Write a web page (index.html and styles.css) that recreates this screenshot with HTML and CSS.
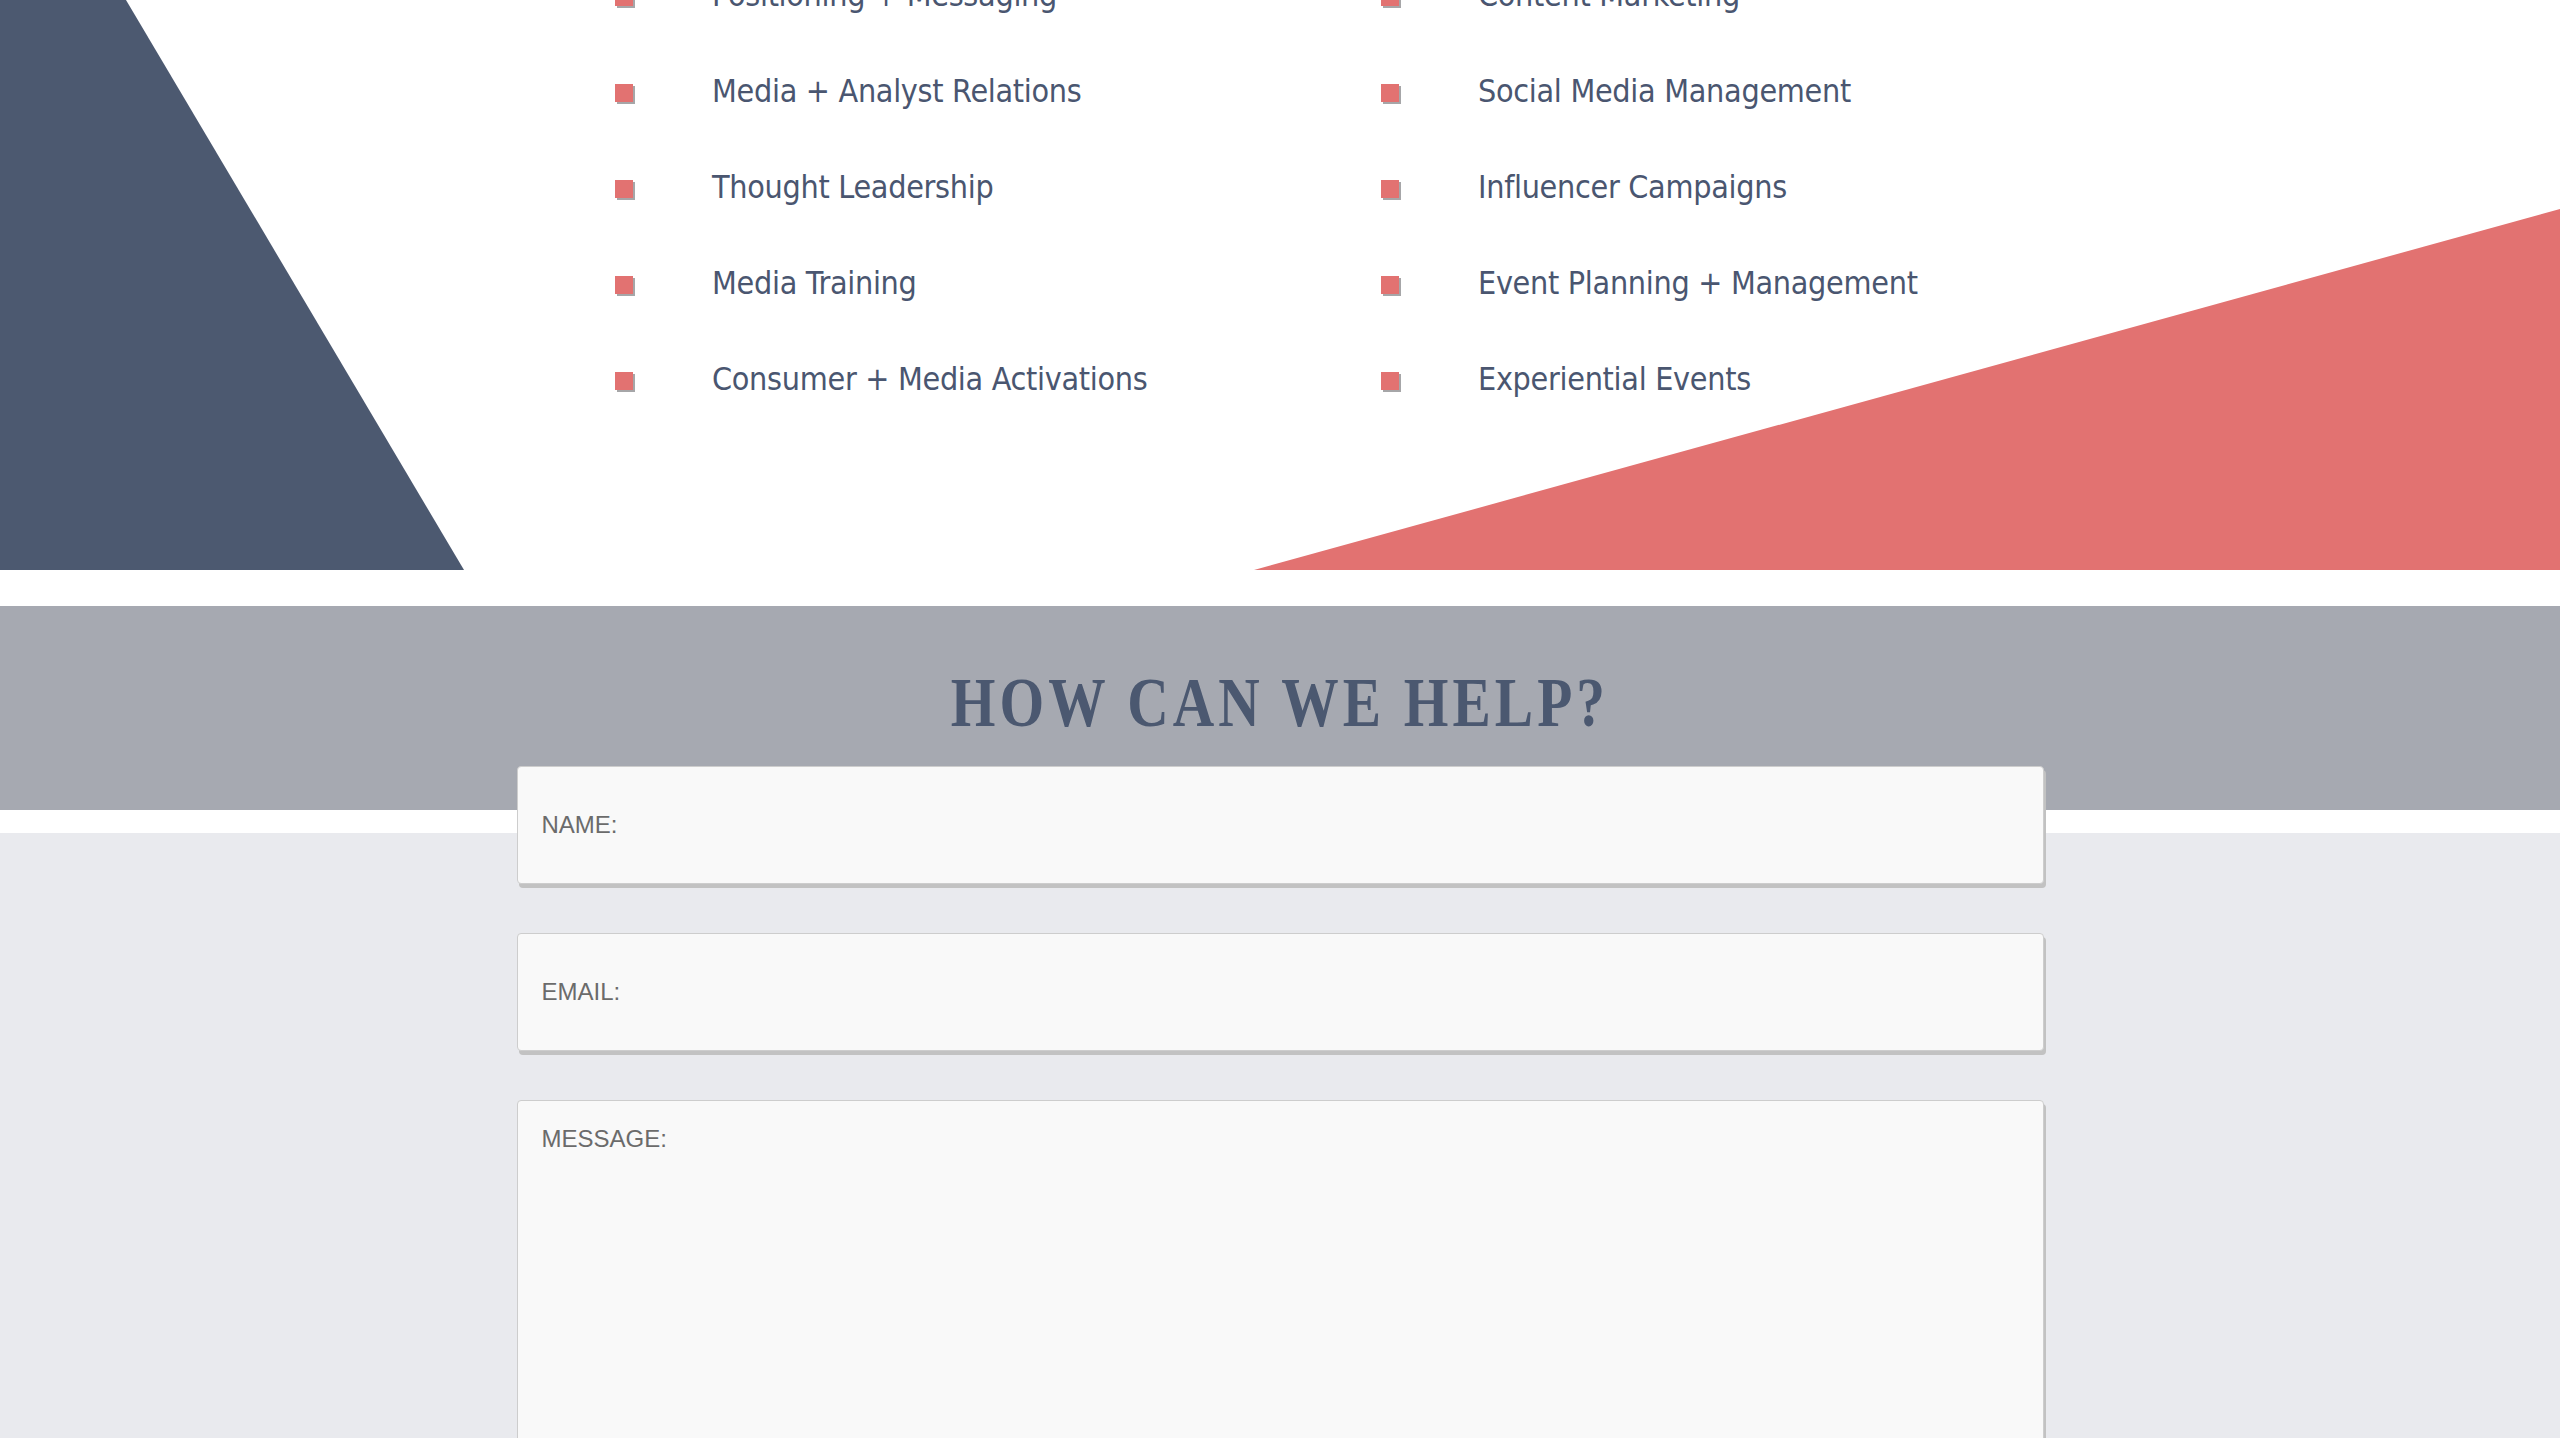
FILE: index.html
```html
<!DOCTYPE html>
<html lang="en">
<head>
<meta charset="utf-8">
<title>Services and Contact</title>
<link rel="stylesheet" href="styles.css">
</head>
<body>
<section class="services">
  <svg class="shapes" width="2560" height="570" viewBox="0 0 2560 570" aria-hidden="true">
    <polygon points="0,0 126,0 464,570 0,570" fill="#4c5970"/>
    <polygon points="1254,570 2560,209 2560,570" fill="#e27271"/>
  </svg>
  <ul class="service-list">
    <li><span class="bullet"></span>Positioning + Messaging</li>
    <li><span class="bullet"></span>Content Marketing</li>
    <li><span class="bullet"></span>Media + Analyst Relations</li>
    <li><span class="bullet"></span>Social Media Management</li>
    <li><span class="bullet"></span>Thought Leadership</li>
    <li><span class="bullet"></span>Influencer Campaigns</li>
    <li><span class="bullet"></span>Media Training</li>
    <li><span class="bullet"></span>Event Planning + Management</li>
    <li><span class="bullet"></span>Consumer + Media Activations</li>
    <li><span class="bullet"></span>Experiential Events</li>
  </ul>
</section>

<section class="contact-band">
  <h2 class="contact-title">HOW CAN WE HELP?</h2>
</section>

<section class="form-area">
  <form class="contact-form">
    <label class="field"><span class="field-label">NAME:</span></label>
    <label class="field"><span class="field-label">EMAIL:</span></label>
    <label class="field field-message"><span class="field-label">MESSAGE:</span></label>
  </form>
</section>
</body>
</html>
```

FILE: styles.css
```css
html, body {
  margin: 0;
  padding: 0;
  background: #ffffff;
}

body {
  font-family: "DejaVu Sans", sans-serif;
  overflow-x: hidden;
}

.services {
  position: relative;
  height: 570px;
  overflow: hidden;
}

.shapes {
  position: absolute;
  left: 0;
  top: 0;
  z-index: 0;
}

.service-list {
  position: relative;
  z-index: 1;
  list-style: none;
  margin: -53px 0 0 615px;
  padding: 0;
  display: grid;
  grid-template-columns: 766px 766px;
}

.service-list li {
  display: flex;
  align-items: center;
  height: 96px;
  line-height: 96px;
  font-family: "DejaVu Sans Condensed", "DejaVu Sans", sans-serif;
  font-stretch: condensed;
  font-size: 32px;
  letter-spacing: -0.3px;
  color: #4a5670;
  white-space: nowrap;
}

.bullet {
  flex: 0 0 18px;
  width: 18px;
  height: 18px;
  margin-top: 4px;
  margin-right: 79px;
  background: #e27271;
  box-shadow: 2px 2px 0 #a6a6a8;
}

.contact-band {
  background: #a6a9b1;
  height: 204px;
  margin-top: 36px;
  padding-top: 62px;
  box-sizing: border-box;
  text-align: center;
}

.contact-title {
  margin: 0;
  font-family: "Liberation Serif", "Times New Roman", serif;
  font-weight: bold;
  font-size: 70px;
  line-height: 70px;
  letter-spacing: 5px;
  color: #4b5870;
  transform: scaleX(0.82);
}

.form-area {
  display: flow-root;
  background: #e9eaee;
  margin-top: 23px;
  padding-bottom: 60px;
}

.contact-form {
  position: relative;
  z-index: 1;
  width: 1527px;
  margin: -67px auto 0;
  display: flex;
  flex-direction: column;
  gap: 49px;
}

.field {
  display: flex;
  align-items: center;
  box-sizing: border-box;
  height: 118px;
  padding: 0 24px;
  background: #f9f9f9;
  border: 1px solid #cdcdcd;
  border-radius: 4px;
  box-shadow: 2px 4px 0 #c2c2c2;
}

.field-label {
  font-family: "Liberation Sans", Arial, sans-serif;
  font-size: 24px;
  color: #6b6b6b;
}

.field-message {
  align-items: flex-start;
  height: 400px;
  padding-top: 24px;
}
```
